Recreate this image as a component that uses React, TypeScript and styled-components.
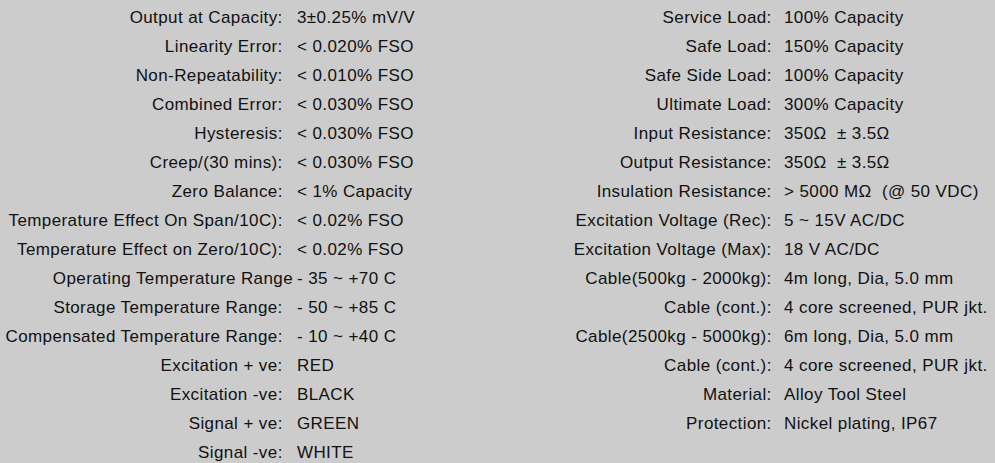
import React from 'react';
import styled, { createGlobalStyle } from 'styled-components';

const GlobalStyle = createGlobalStyle`
  html, body {
    margin: 0;
    padding: 0;
    background: #cccccc;
  }
`;

const Page = styled.div`
  display: flex;
  width: 995px;
  height: 463px;
  padding-top: 3px;
  box-sizing: border-box;
  background: #cccccc;
  font-family: "Liberation Sans", Arial, sans-serif;
  font-size: 17px;
  letter-spacing: 0.4px;
  color: #111111;
  overflow: hidden;
`;

const SpecTable = styled.div<{ $labelWidth: number; $gap: number; $width: number }>`
  display: grid;
  grid-template-columns: ${p => p.$labelWidth}px 1fr;
  column-gap: ${p => p.$gap}px;
  grid-auto-rows: 29px;
  align-content: start;
  width: ${p => p.$width}px;
  flex-shrink: 0;
`;

const Label = styled.div`
  text-align: right;
  white-space: pre;
  line-height: 29px;
`;

const Value = styled.div`
  white-space: pre;
  line-height: 29px;
`;

const left: [string, string][] = [
  ['Output at Capacity:', '3±0.25% mV/V'],
  ['Linearity Error:', '< 0.020% FSO'],
  ['Non-Repeatability:', '< 0.010% FSO'],
  ['Combined Error:', '< 0.030% FSO'],
  ['Hysteresis:', '< 0.030% FSO'],
  ['Creep/(30 mins):', '< 0.030% FSO'],
  ['Zero Balance:', '< 1% Capacity'],
  ['Temperature Effect On Span/10C):', '< 0.02% FSO'],
  ['Temperature Effect on Zero/10C):', '< 0.02% FSO'],
  ['Operating Temperature Range', '- 35 ~ +70 C'],
  ['Storage Temperature Range:', '- 50 ~ +85 C'],
  ['Compensated Temperature Range:', '- 10 ~ +40 C'],
  ['Excitation + ve:', 'RED'],
  ['Excitation -ve:', 'BLACK'],
  ['Signal + ve:', 'GREEN'],
  ['Signal -ve:', 'WHITE'],
];

const right: [string, string][] = [
  ['Service Load:', '100% Capacity'],
  ['Safe Load:', '150% Capacity'],
  ['Safe Side Load:', '100% Capacity'],
  ['Ultimate Load:', '300% Capacity'],
  ['Input Resistance:', '350Ω  ± 3.5Ω'],
  ['Output Resistance:', '350Ω  ± 3.5Ω'],
  ['Insulation Resistance:', '> 5000 MΩ  (@ 50 VDC)'],
  ['Excitation Voltage (Rec):', '5 ~ 15V AC/DC'],
  ['Excitation Voltage (Max):', '18 V AC/DC'],
  ['Cable(500kg - 2000kg):', '4m long, Dia, 5.0 mm'],
  ['Cable (cont.):', '4 core screened, PUR jkt.'],
  ['Cable(2500kg - 5000kg):', '6m long, Dia, 5.0 mm'],
  ['Cable (cont.):', '4 core screened, PUR jkt.'],
  ['Material:', 'Alloy Tool Steel'],
  ['Protection:', 'Nickel plating, IP67'],
];

const pad = (label: string) => (label.endsWith(':') ? label + '\u00a0\u00a0' : label);

const Rows = ({ rows }: { rows: [string, string][] }) => (
  <>
    {rows.map(([label, value], idx) => (
      <React.Fragment key={idx}>
        <Label>{pad(label)}</Label>
        <Value>{value}</Value>
      </React.Fragment>
    ))}
  </>
);

const App = (): JSX.Element => (
  <>
    <GlobalStyle />
    <Page>
      <SpecTable $labelWidth={293} $gap={4} $width={570}>
        <Rows rows={left} />
      </SpecTable>
      <SpecTable $labelWidth={212} $gap={2} $width={425}>
        <Rows rows={right} />
      </SpecTable>
    </Page>
  </>
);

export default App;
